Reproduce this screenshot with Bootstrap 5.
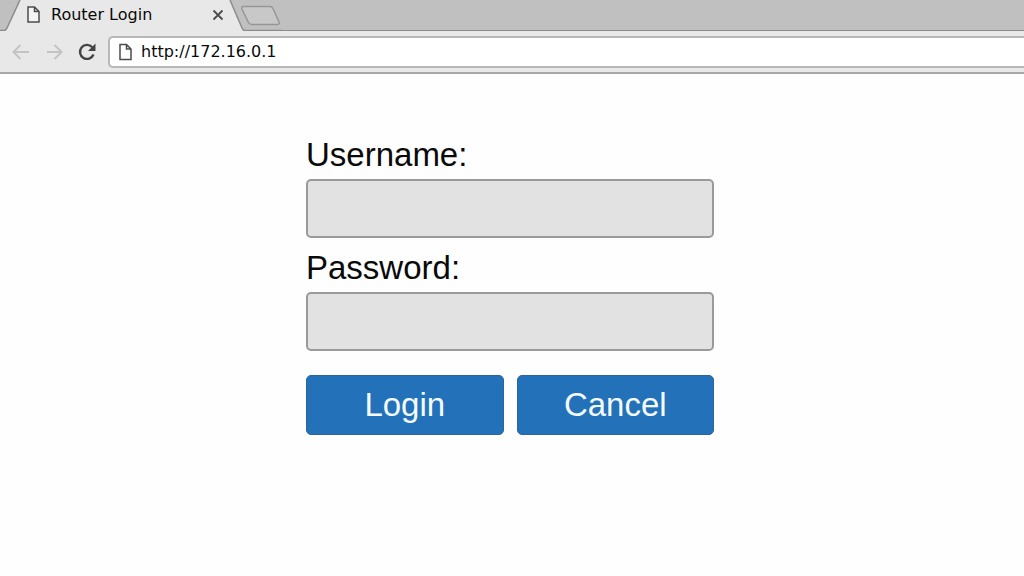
<!DOCTYPE html>
<html lang="en">
<head>
<meta charset="utf-8">
<meta name="viewport" content="width=device-width, initial-scale=1">
<title>Router Login</title>
<link href="https://cdn.jsdelivr.net/npm/bootstrap@5.3.0/dist/css/bootstrap.min.css" rel="stylesheet">
<style>
  body { background: #fefefe; color: #0a0a0a; font-family: "Liberation Sans", Arial, sans-serif; }
  .chrome-bar { font: 16px/20px "DejaVu Sans", sans-serif; background: #e8e8e8; border-bottom: 2px solid #a8a8a8; }
  .tab-strip { height: 31px; background: #c0c0c0; box-shadow: inset 0 -1px #8c8c8c; }
  .strip-edge { width: 26px; height: 31px; }
  .open-tab { width: 202px; padding: 0 3px 2px 0; background: #e8e8e8; }
  .strip-new { width: 54px; height: 31px; }
  .page-icon { width: 14px; height: 18px; }
  .open-tab span { margin-left: 11px; }
  .tab-close { width: 14px; height: 14px; }
  .tool-row { padding: 5px 0 4px 11px; }
  .tool-btn { width: 20px; height: 20px; }
  .reload { margin-left: 10px; }
  .address { height: 32px; margin-left: 11px; padding-left: 9px; background: #fff; border: 2px solid #b8b8b8; border-right: 0; border-radius: 5px 0 0 5px; }
  .address input { outline: 0; color: #0a0a0a; }
  .login-area { padding-top: 61px; }
  .login-form { width: 408px; }
  .login-form label { font-size: 33px; line-height: 40px; }
  .field { height: 59px; font-size: 28px; background: #e2e2e2; border: 2px solid #9a9a9a; border-radius: 5px; }
  .field:focus { background: #e2e2e2; }
  .field-row { margin-bottom: 10px; }
  .actions { gap: 13px; padding-top: 14px; }
  .btn-action {
    --bs-btn-color: #f4fbff; --bs-btn-bg: #2271b9; --bs-btn-border-color: #2b659b;
    --bs-btn-hover-color: #fff; --bs-btn-hover-bg: #1c62a3; --bs-btn-hover-border-color: #1c5388;
    height: 60px; padding: 0; font-size: 33px; line-height: 40px; border-radius: 5px;
  }
</style>
</head>
<body>
<header class="chrome-bar">
  <div class="tab-strip d-flex">
    <svg class="strip-edge flex-shrink-0" viewBox="0 0 26 31" aria-hidden="true">
      <path d="M20 0H26V31H0V30.500H4Q6 30.500 7 28Z" fill="#e8e8e8"/>
      <path d="M0 30.500H4Q6 30.500 7 28L20 0" fill="none" stroke="#8c8c8c" stroke-width="1.500"/>
    </svg>
    <div class="open-tab d-flex align-items-center flex-shrink-0">
      <svg class="page-icon flex-shrink-0" viewBox="0 0 14 18" fill="#f4f4f4" stroke="#4c4c4c" stroke-width="1.500" aria-hidden="true"><path d="M2 1H8.500L13 5.500V16H2ZM8.500 1V5.500H13"/></svg>
      <span class="flex-grow-1 text-nowrap">Router Login</span>
      <button type="button" class="btn p-0 border-0 d-flex" aria-label="Close tab">
        <svg class="tab-close" viewBox="0 0 14 14" fill="none" stroke="#4c4c4c" stroke-width="1.800"><path d="M2.500 2.500L11.500 11.500M11.500 2.500L2.500 11.500"/></svg>
      </button>
    </div>
    <button type="button" class="btn p-0 border-0 rounded-0 d-flex flex-shrink-0" aria-label="New tab">
      <svg class="strip-new" viewBox="0 0 54 31">
        <path d="M0 0H2L14 28Q15 30.500 17 30.500V31H0Z" fill="#e8e8e8"/>
        <path d="M2 0L14 28Q15 30.500 17 30.500H54" fill="none" stroke="#8c8c8c" stroke-width="1.500"/>
        <path d="M15.500 6.500H42Q44 6.500 45 8.500L51 22Q52 24.500 49 24.500H24Q21.500 24.500 20.500 22.500L14 9Q13 6.500 15.500 6.500Z" fill="#c8c8c8" stroke="#969696" stroke-width="1.500"/>
      </svg>
    </button>
  </div>
  <div class="tool-row d-flex align-items-center">
    <button type="button" class="btn p-0 border-0 d-flex" aria-label="Back">
      <svg class="tool-btn" viewBox="0 0 20 20" fill="none" stroke="#c3c3c3" stroke-width="2"><path d="M18 10H3M9.500 3L2.500 10L9.500 17"/></svg>
    </button>
    <button type="button" class="btn p-0 border-0 d-flex ms-3" aria-label="Forward">
      <svg class="tool-btn" viewBox="0 0 20 20" fill="none" stroke="#c3c3c3" stroke-width="2"><path d="M0 10H14M7.500 3L14.500 10L7.500 17"/></svg>
    </button>
    <button type="button" class="btn p-0 border-0 d-flex reload" aria-label="Reload">
      <svg class="tool-btn" viewBox="0 0 20 20"><path d="M15.200 5.200A7 7 0 1 0 16.500 12.500" fill="none" stroke="#444" stroke-width="2.400"/><path d="M18.500 1.500V9H11Z" fill="#444"/></svg>
    </button>
    <div class="address d-flex align-items-center flex-grow-1">
      <svg class="page-icon flex-shrink-0" viewBox="0 0 14 18" fill="#fff" stroke="#4c4c4c" stroke-width="1.500" aria-hidden="true"><path d="M1 1.500H7.500L12 6V16.500H1ZM7.500 1.500V6H12"/></svg>
      <input type="text" class="flex-grow-1 border-0 bg-transparent p-0 ms-2" aria-label="Address" value="http://172.16.0.1">
    </div>
  </div>
</header>
<main class="login-area d-flex justify-content-center pe-1">
  <form class="login-form">
    <div class="field-row">
      <label for="username" class="d-block mb-1">Username:</label>
      <input type="text" id="username" class="form-control field">
    </div>
    <div class="field-row">
      <label for="password" class="d-block mb-1">Password:</label>
      <input type="password" id="password" class="form-control field">
    </div>
    <div class="actions d-flex">
      <button type="submit" class="btn btn-action flex-fill w-50">Login</button>
      <button type="reset" class="btn btn-action flex-fill w-50">Cancel</button>
    </div>
  </form>
</main>
<script src="https://cdn.jsdelivr.net/npm/bootstrap@5.3.0/dist/js/bootstrap.bundle.min.js"></script>
</body>
</html>
